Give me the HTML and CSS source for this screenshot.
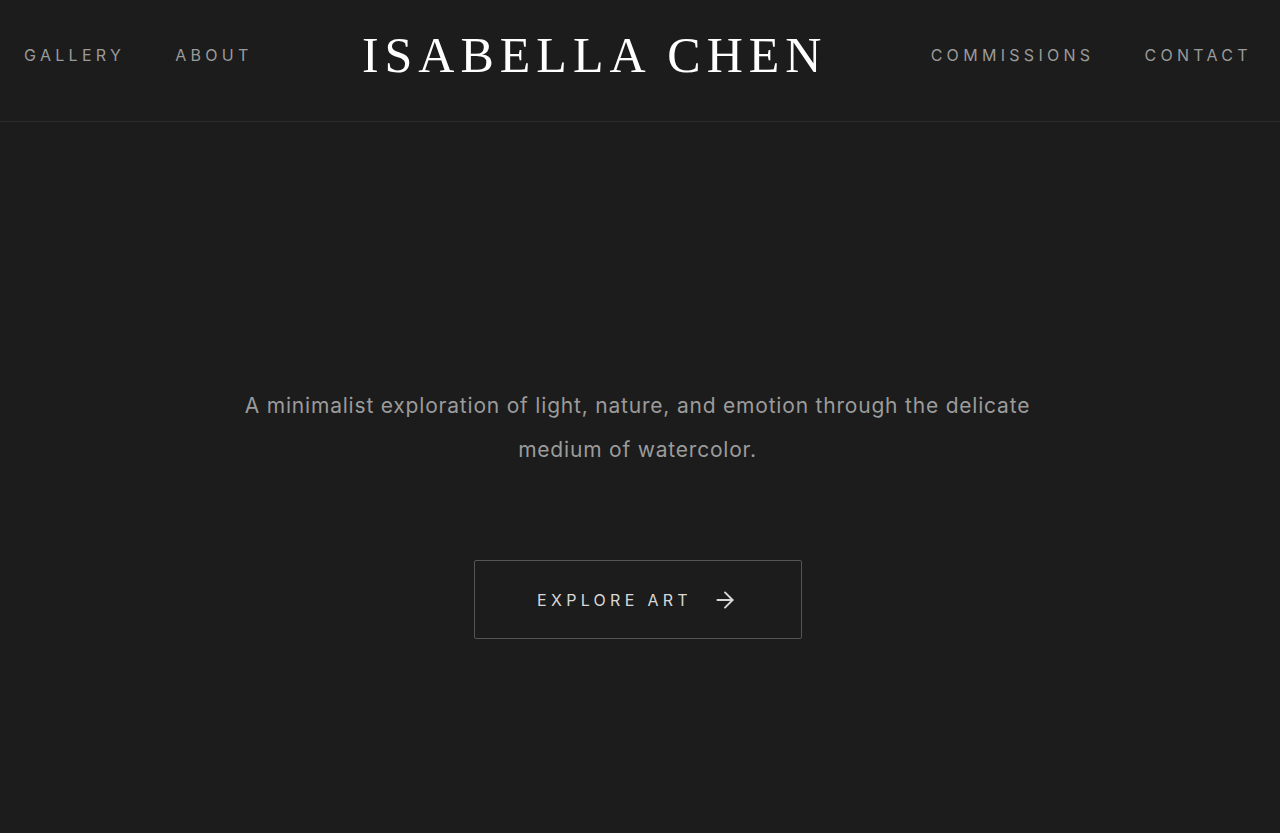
FILE: index.html
```html
<!DOCTYPE html>
<html lang="en">
<head>
<meta charset="utf-8">
<title>Isabella Chen</title>
<link rel="stylesheet" href="styles.css">
</head>
<body>
<header class="site-header">
  <nav class="nav nav-left">
    <a href="#" class="nav-link">Gallery</a>
    <a href="#" class="nav-link">About</a>
  </nav>
  <div class="logo">Isabella Chen</div>
  <nav class="nav nav-right">
    <a href="#" class="nav-link">Commissions</a>
    <a href="#" class="nav-link">Contact</a>
  </nav>
</header>
<main class="hero">
  <p class="tagline">A minimalist exploration of light, nature, and emotion through the delicate medium of watercolor.</p>
  <a href="#" class="cta">
    <span class="cta-label">Explore Art</span>
    <svg class="cta-icon" width="26" height="26" viewBox="0 0 24 24" fill="none" stroke="currentColor" stroke-width="1.75" stroke-linecap="round" stroke-linejoin="round"><path d="M5 12h14"/><path d="M12 5l7 7-7 7"/></svg>
  </a>
</main>
</body>
</html>
```

FILE: styles.css
```css
* { box-sizing: border-box; }
html, body { margin: 0; padding: 0; }
body {
  background: #1c1c1c;
  color: #e6e6e6;
  font-family: Inter, "Noto Sans", sans-serif;
  min-height: 833px;
}
.site-header {
  height: 122px;
  border-bottom: 1px solid #2c2c2c;
  display: flex;
  justify-content: space-between;
  align-items: center;
  padding: 0 28px 12px 24px;
}
.nav {
  display: flex;
  gap: 50px;
  align-items: center;
}
.nav-link {
  color: #9a9a9a;
  text-decoration: none;
  text-transform: uppercase;
  font-size: 16px;
  letter-spacing: 4.3px;
  font-weight: 400;
}
.logo {
  font-family: "Liberation Serif", "Times New Roman", serif;
  font-size: 50px;
  line-height: 1;
  letter-spacing: 0.12em;
  text-transform: uppercase;
  color: #ffffff;
  margin-right: -0.12em;
}
.hero {
  display: flex;
  flex-direction: column;
  align-items: center;
  padding-top: 262px;
  padding-right: 5px;
}
.tagline {
  margin: 0;
  max-width: 800px;
  text-align: center;
  font-size: 21px;
  line-height: 44px;
  letter-spacing: 0.8px;
  color: #9b9b9b;
  font-weight: 400;
}
.cta {
  margin-top: 88px;
  width: 328px;
  height: 79px;
  border: 1px solid #555;
  border-radius: 2px;
  display: flex;
  align-items: center;
  justify-content: center;
  gap: 20px;
  color: #d8d8d8;
  text-decoration: none;
}
.cta-label {
  text-transform: uppercase;
  font-size: 16px;
  letter-spacing: 4.3px;
}
.cta-icon { display: block; }
```
